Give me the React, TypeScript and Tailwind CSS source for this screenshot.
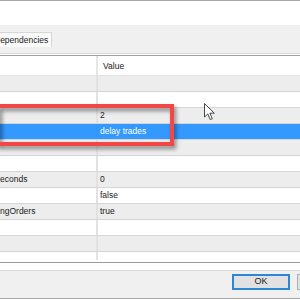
import React from 'react'

const rows: { name: string; value: string }[] = [
    { name: '', value: '' },
    { name: '', value: '' },
    { name: '', value: '2' },
    { name: '', value: 'delay trades' },
    { name: '', value: '' },
    { name: '', value: '' },
    { name: 'econds', value: '0' },
    { name: '', value: 'false' },
    { name: 'ngOrders', value: 'true' },
    { name: '', value: '' },
    { name: '', value: '' },
]

export default function App() {
    return (
        <div
            className="relative w-[300px] h-[300px] overflow-hidden bg-white text-[8.5px] text-[#1a1a1a]"
            style={{ fontFamily: '"Liberation Sans", Arial, sans-serif' }}
        >
            <div className="h-px bg-[#a8a8a8]" />
            <div className="h-[24px] bg-white" />

            {/* tab strip */}
            <div className="h-[29px] bg-[#f0f0f0] pt-[7px] border-b border-[#d8d8d8]">
                <div className="h-[15px] w-[52px] bg-[#fafafa] border-r border-t border-[#d6d6d6] flex items-center overflow-hidden">
                    <span className="whitespace-nowrap -ml-[6px]">Dependencies</span>
                </div>
            </div>
            <div className="h-px bg-white" />
            <div className="h-px bg-[#a0a0a0]" />

            {/* property grid */}
            <div className="h-[206px] flex flex-col">
                <div className="h-[20px] flex border-b border-[#e2e2e2] bg-white shrink-0">
                    <div className="w-[98px] border-r-2 border-[#e6e6e6]" />
                    <div className="pl-[5px] pt-[2px] flex items-center">Value</div>
                </div>
                {rows.map((r, i) => {
                    const selected = i === 3
                    const bg = selected ? 'bg-[#3399ff] text-white' : i % 2 === 0 ? 'bg-[#ededed]' : 'bg-white'
                    return (
                        <div key={i} className={`h-[16px] flex shrink-0 border-b border-[#d6d6d6] ${bg}`}>
                            <div className={`w-[98px] flex items-center whitespace-nowrap overflow-hidden ${selected ? '' : 'border-r-2 border-[#e2e2e2]'}`}>
                                {r.name}
                            </div>
                            <div className="pl-[2px] flex items-center whitespace-nowrap">{r.value}</div>
                        </div>
                    )
                })}
                <div className="flex-1 flex bg-white">
                    <div className="w-[98px] border-r-2 border-[#e2e2e2] mb-[2px]" />
                </div>
            </div>
            <div className="h-px bg-[#9a9a9a]" />
            <div className="h-[7px] bg-white" />
            <div className="h-px bg-[#dadada]" />

            {/* buttons */}
            <div className="h-[28px] bg-[#f0f0f0] border-b border-[#a8a8a8] flex justify-end items-start pt-[3px] gap-[7px]">
                <button className="w-[58px] h-[16px] bg-[#e1e1e1] border-2 border-[#2b86d8] flex items-center justify-center text-[9px] text-[#1a1a1a]">
                    OK
                </button>
                <button className="w-[58px] h-[16px] bg-[#e1e1e1] border border-[#adadad] -mr-[55px] shrink-0 text-[9px]">
                    Cancel
                </button>
            </div>

            {/* red highlight overlay */}
            <div className="absolute left-[-4px] top-[104px] w-[178px] h-[42px] border-4 border-[#f34747] drop-shadow-[2px_3px_2px_rgba(0,0,0,0.45)]" />

            {/* mouse cursor */}
            <svg className="absolute left-[204px] top-[103px]" width="12" height="18" viewBox="0 0 12 18">
                <path d="M0.5 0.5 L0.5 14 L3.8 10.9 L6.2 16.6 L8.3 15.7 L5.9 10.2 L10.3 10.2 Z" fill="#fff" stroke="#333" strokeWidth="0.9" strokeLinejoin="round" />
            </svg>
        </div>
    )
}
